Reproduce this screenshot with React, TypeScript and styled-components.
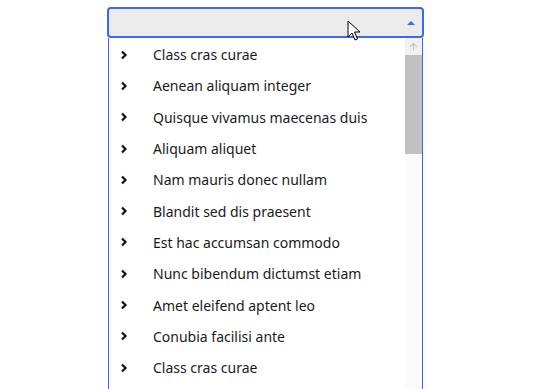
import React from "react";
import styled, { createGlobalStyle } from "styled-components";

const GlobalStyle = createGlobalStyle`
  html, body {
    margin: 0;
    padding: 0;
    background: #ffffff;
    overflow: hidden;
  }
  body {
    font-family: "Noto Sans", "Noto Sans CJK SC", sans-serif;
  }
`;

const Page = styled.div`
  width: 537px;
  height: 389px;
  padding: 7px 0 0 107px;
  box-sizing: border-box;
  position: relative;
  overflow: hidden;
`;

const SelectBox = styled.div`
  width: 317px;
  height: 31px;
  box-sizing: border-box;
  border: 2px solid #3b67f2;
  border-radius: 4px;
  background: #ebebeb;
  display: flex;
  align-items: center;
  justify-content: flex-end;
  padding-right: 7px;
`;

const Caret = styled.span`
  width: 0;
  height: 0;
  border-left: 4px solid transparent;
  border-right: 4px solid transparent;
  border-bottom: 4px solid #3b67f2;
  margin-top: 1px;
`;

const Dropdown = styled.div`
  width: 315px;
  height: 351px;
  margin-left: 1px;
  box-sizing: border-box;
  border-left: 1px solid #3b67f2;
  border-right: 1px solid #3b67f2;
  background: #ffffff;
  display: flex;
`;

const ItemList = styled.ul`
  flex: 1;
  list-style: none;
  margin: 0;
  padding: 1px 0 0;
`;

const Item = styled.li`
  height: 31.3px;
  display: flex;
  align-items: center;
  padding-left: 11px;
  font-size: 14px;
  color: #1a1a1a;
  white-space: nowrap;
`;

const ChevronWrap = styled.span`
  width: 33px;
  display: flex;
  align-items: center;
`;

const Scrollbar = styled.div`
  width: 17px;
  display: flex;
  flex-direction: column;
  background: #fafafa;
`;

const ScrollButton = styled.div`
  height: 17px;
  background: #f1f1f1;
  display: flex;
  align-items: center;
  justify-content: center;
`;

const Thumb = styled.div`
  height: 99px;
  background: #c1c1c1;
`;

const Cursor = styled.svg`
  position: absolute;
  left: 347px;
  top: 20px;
`;

const items = [
  "Class cras curae",
  "Aenean aliquam integer",
  "Quisque vivamus maecenas duis",
  "Aliquam aliquet",
  "Nam mauris donec nullam",
  "Blandit sed dis praesent",
  "Est hac accumsan commodo",
  "Nunc bibendum dictumst etiam",
  "Amet eleifend aptent leo",
  "Conubia facilisi ante",
  "Class cras curae",
];

const Chevron = () => (
  <svg width="8" height="10" viewBox="0 0 8 10">
    <polyline points="2,1.5 5.5,5 2,8.5" fill="none" stroke="#111" strokeWidth="2.2" />
  </svg>
);

export default function App() {
  return (
    <Page>
      <GlobalStyle />
      <SelectBox>
        <Caret />
      </SelectBox>
      <Dropdown>
        <ItemList>
          {items.map((label, index) => (
            <Item key={index}>
              <ChevronWrap>
                <Chevron />
              </ChevronWrap>
              {label}
            </Item>
          ))}
        </ItemList>
        <Scrollbar>
          <ScrollButton>
            <svg width="9" height="10" viewBox="0 0 9 10">
              <path d="M4.5 1.5 V9 M1 5 L4.5 1.5 L8 5" fill="none" stroke="#c8c8c8" strokeWidth="1.2" />
            </svg>
          </ScrollButton>
          <Thumb />
        </Scrollbar>
      </Dropdown>
      <Cursor width="14" height="22" viewBox="0 0 14 22">
        <path d="M1 1 L1 17 L5 13 L8 20 L10.5 19 L7.5 12 L13 12 Z" fill="#fff" stroke="#000" strokeWidth="1" strokeLinejoin="round" />
      </Cursor>
    </Page>
  );
}
